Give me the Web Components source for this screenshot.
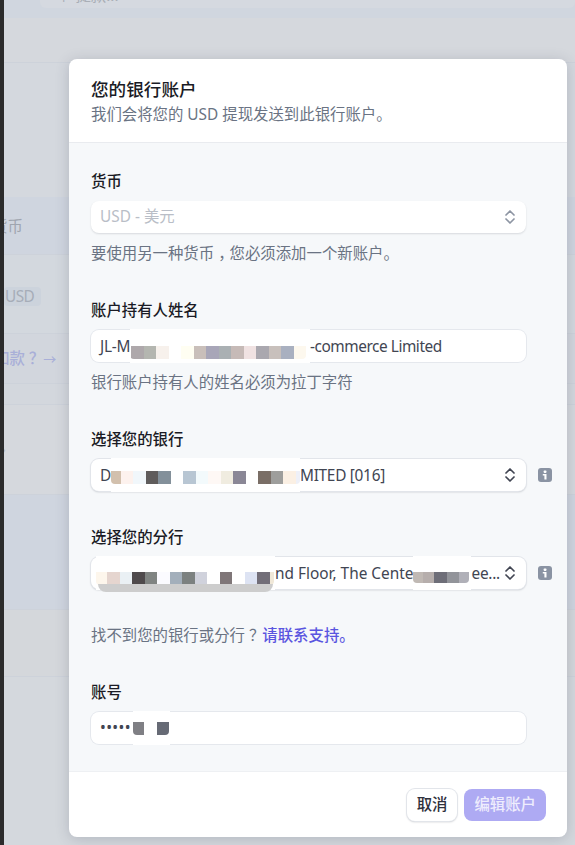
<!DOCTYPE html>
<html lang="zh">
<head>
<meta charset="utf-8">
<title>您的银行账户</title>
<style>
html, body { margin: 0; height: 100%; overflow: hidden; background: #d4d8dd; }
body { font: 15.4px/20px "Noto Sans", "Noto Sans CJK SC", sans-serif; }
/* full-width punctuation sits in the middle of its cell in the reference */
.mid { margin-left: 4px; letter-spacing: -4px; }
.lat { letter-spacing: -.28px; padding-top: 2px; }
</style>
</head>
<body>
<payout-screen>
    <page-row h="18" bg="#d0d6df"><search-stub>↑ 提款...</search-stub></page-row>
    <page-row h="45" bg="#d5d8dd" line></page-row>
    <page-row h="134" bg="#d4d8de"></page-row>
    <page-row h="58" bg="#cfd5df" line><span style="margin:2px 0 0 -12px;color:#9fa5af">货币</span></page-row>
    <page-row h="79" bg="#d3d8de" line><span style="background:#ccd3dc;color:#a6adb8;border-radius:4px;padding:0 7px 0 1px;margin-top:4px;line-height:19px;letter-spacing:-.6px">USD</span></page-row>
    <page-row h="50" bg="#d2d6dd" line><span style="margin-left:-10px;color:#a9afd8;font-weight:500">如款<span class="mid">？</span><span style="margin-left:3px;font-size:13px">→</span></span></page-row>
    <page-row h="21" bg="#d3d7dd" line></page-row>
    <page-row h="90" bg="#d5d8dd" line><span style="color:#b6bcc6;margin-left:-3px">›</span></page-row>
    <page-row h="115" bg="#cfd5df" line></page-row>
    <page-row h="67" bg="#d4d7db" line></page-row>
    <page-row h="168" bg="#d4d8dd"></page-row>

    <bank-modal slot="modal">
        <span slot="title">您的银行账户</span>
        <span slot="subtitle">我们会将您的 USD 提现发送到此银行账户。</span>

        <bank-field label="货币">
            <bank-input kind="disabled">USD - 美元</bank-input>
            <span slot="help">要使用另一种货币<span class="mid">，</span>您必须添加一个新账户。</span>
        </bank-field>

        <bank-field label="账户持有人姓名">
            <bank-input>
                <span class="lat">JL-M</span>
                <blur-patch style="width:180px" top="17" h="13"
                    cells="#fff:1,#aea8ab:12.5,#b4b6b0:12.5,#f7f1ec:12.5,#fff:12.5,#fffef2:12.5,#c9bfba:12.5,#a8a6b8:12.5,#aab0b3:12.5,#c6bab7:12.5,#f0e2e2:12.5,#aaa8af:12.5,#c8c0bc:12.5,#a9b0c0:12.5,#fdf8ee:12.5"></blur-patch>
                <span class="lat" style="letter-spacing:-.45px">-commerce Limited</span>
            </bank-input>
            <span slot="help">银行账户持有人的姓名必须为拉丁字符</span>
        </bank-field>

        <bank-field label="选择您的银行" info>
            <bank-input kind="select">
                <span class="lat">D</span>
                <blur-patch style="width:189px" top="13" h="13"
                    cells="#d2c0ad:10,#fdf2ee:12.5,#f1f7fb:12.5,#5f5c5c:12.5,#83909a:12.5,#fff:12.5,#b8c6d3:12.5,#f3fafc:12.5,#fef8f5:12.5,#f0ece0:12.5,#8a8796:12.5,#fff:12.5,#7a6e66:12.5,#9e9e9c:12.5,#fbf0e4:12.5,#eef0f8:4"></blur-patch>
                <span class="lat">MITED [016]</span>
            </bank-input>
        </bank-field>

        <bank-field label="选择您的分行" info>
            <bank-input kind="select">
                <blur-patch style="width:179px;margin-left:-4px" top="16" h="13" under
                    cells="#fdf6ec:11,#e5d5cf:12.5,#eaf0f4:12.5,#4f4a4c:12.5,#808482:12.5,#fbfbff:12.5,#a3afbb:12.5,#7c8180:12.5,#d0d2dc:12.5,#fff:12.5,#7f7678:12.5,#fff:12.5,#dde3f3:12.5,#726e78:12.5,#f0e8d8:4"></blur-patch>
                <span class="lat" style="letter-spacing:0">nd Floor, The Cente</span>
                <blur-patch style="width:58px" top="16" h="11"
                    cells="#c0b9b4:10,#b6aeac:11,#6e6e78:12.5,#92949a:12.5,#b0b0b8:10"></blur-patch>
                <span class="lat">ee...</span>
            </bank-input>
        </bank-field>

        <div>找不到您的银行或分行<span class="mid">？</span><a href="#" style="color:#5a55e0;font-weight:500;text-decoration:none;margin-left:2px">请联系支持。</a></div>

        <bank-field label="账号">
            <bank-input>
                <span style="letter-spacing:.4px">•••••</span>
                <blur-patch style="width:37px;margin-left:2px" top="11" h="13"
                    cells="#7f7f84:11,#fff:13,#666a75:12.5"></blur-patch>
            </bank-input>
        </bank-field>

        <bank-button slot="actions">取消</bank-button>
        <bank-button slot="actions" primary>编辑账户</bank-button>
    </bank-modal>
</payout-screen>

<script>
// page behind the dialog, dimmed. strip on the left is the neighbouring window
customElements.define('payout-screen', class extends HTMLElement {
    constructor() {
        super();
        this.attachShadow({mode: 'open'}).innerHTML = `
<style>
:host {
    display: flex;
    position: relative;
    width: 575px;
    height: 845px;
    overflow: hidden;
    filter: blur(.35px);
}
.strip {
    flex: none;
    width: 4px;
    background: #2b2b2b;
    z-index: 1;
}
.rows {
    flex: 1;
    min-width: 0;
    display: flex;
    flex-direction: column;
}
::slotted([slot=modal]) {
    position: absolute;
    top: 59px;
    left: 69px;
}
</style>
<div class="strip"></div>
<div class="rows"><slot></slot></div>
<slot name="modal"></slot>
`;
    }
});

customElements.define('page-row', class extends HTMLElement {
    connectedCallback() {
        this.attachShadow({mode: 'open'}).innerHTML = `
<style>
:host {
    display: flex;
    flex: none;
    align-items: center;
    box-sizing: border-box;
    height: ${this.getAttribute('h')}px;
    background: ${this.getAttribute('bg')};
    border-bottom: ${this.hasAttribute('line') ? '1px solid #cdd2da' : '0'};
    white-space: nowrap;
}
</style>
<slot></slot>
`;
    }
});

customElements.define('search-stub', class extends HTMLElement {
    constructor() {
        super();
        this.attachShadow({mode: 'open'}).innerHTML = `
<style>
:host {
    display: flex;
    align-items: flex-end;
    align-self: flex-start;
    box-sizing: border-box;
    height: 8px;
    width: 535px;
    margin-left: 36px;
    padding-left: 16px;
    overflow: hidden;
    line-height: 14px;
    background: #d5d9e0;
    border-radius: 0 0 6px 6px;
    color: #a9aeb6;
}
span { display: block; margin-bottom: 5px; }
</style>
<span><slot></slot></span>
`;
    }
});

customElements.define('bank-modal', class extends HTMLElement {
    constructor() {
        super();
        this.attachShadow({mode: 'open'}).innerHTML = `
<style>
:host {
    display: flex;
    flex-direction: column;
    width: 498px;
    border-radius: 8px;
    overflow: hidden;
    background: #fff;
    box-shadow: 0 2px 14px rgba(60, 66, 87, .22);
}
header {
    height: 84px;
    box-sizing: border-box;
    padding: 19px 22px 0;
    border-bottom: 1px solid #e9ebef;
    color: #6a7383;
}
h1 {
    margin: 0 0 4px;
    font-size: 17.6px;
    line-height: 23px;
    font-weight: 500;
    color: #1a1b25;
}
main {
    display: flex;
    flex-direction: column;
    gap: 37px;
    padding: 29px 15px 27px 22px;
    background: #f6f8fa;
    color: #6a7383;
}
footer {
    display: flex;
    justify-content: flex-end;
    gap: 7px;
    height: 66px;
    box-sizing: border-box;
    padding: 17px 21px 0 0;
    border-top: 1px solid #eef0f3;
}
</style>
<header>
    <h1><slot name="title"></slot></h1>
    <div><slot name="subtitle"></slot></div>
</header>
<main><slot></slot></main>
<footer><slot name="actions"></slot></footer>
`;
    }
});

customElements.define('bank-field', class extends HTMLElement {
    connectedCallback() {
        this.attachShadow({mode: 'open'}).innerHTML = `
<style>
:host {
    display: block;
}
label {
    display: block;
    line-height: 18px;
    padding-top: 1px;
    margin-bottom: 10px;
    font-weight: 500;
    color: #1a1b25;
}
.control {
    display: flex;
    align-items: center;
    gap: 12px;
}
.help {
    display: block;
    line-height: 21px;
    margin-top: 10px;
}
.help:not(.on) { display: none; }
svg { flex: none; }
</style>
<label>${this.getAttribute('label')}</label>
<div class="control">
    <slot></slot>
    ${this.hasAttribute('info') ? `<svg width="14" height="14" viewBox="0 0 14 14">
        <rect width="14" height="14" rx="3" fill="#8a93a3"/>
        <rect x="5.6" y="2.4" width="2.9" height="2.5" rx=".8" fill="#fff"/>
        <path d="M4.8 6h3.7v5.6H6.4V7.5H4.8z" fill="#fff"/>
    </svg>` : ''}
</div>
<div class="help ${this.querySelector('[slot=help]') ? 'on' : ''}"><slot name="help"></slot></div>
`;
    }
});

customElements.define('bank-input', class extends HTMLElement {
    connectedCallback() {
        const kind = this.getAttribute('kind') || '';
        const chevron = kind === 'disabled' ? '#8d95a3' : '#414552';
        this.attachShadow({mode: 'open'}).innerHTML = `
<style>
:host {
    display: flex;
    flex: none;
    align-items: center;
    box-sizing: border-box;
    width: 435px;
    height: 32px;
    padding: 0 9px;
    background: #fff;
    border-radius: 8px;
    white-space: nowrap;
    color: #414552;
    box-shadow: 0 0 0 1px #e5e8ed;
}
:host([kind=select]) {
    box-shadow: 0 0 0 1px #e2e5ea, 0 1px 2px rgba(30, 35, 50, .28);
}
:host([kind=disabled]) {
    color: #b9bec7;
    box-shadow: 0 1px 2px rgba(30, 35, 50, .14);
}
.value {
    flex: 1;
    min-width: 0;
    display: flex;
    align-self: stretch;
    align-items: center;
}
svg { flex: none; margin-right: 1px; }
</style>
<div class="value"><slot></slot></div>
${kind ? `<svg width="12" height="16" viewBox="0 0 12 16" fill="none" stroke="${chevron}" stroke-width="1.7" stroke-linecap="round" stroke-linejoin="round">
    <path d="M2 6l4-4 4 4M2 10l4 4 4-4"/>
</svg>` : ''}
`;
    }
});

// redacted part of a value: a white smear with a row of mosaic squares in it
customElements.define('blur-patch', class extends HTMLElement {
    connectedCallback() {
        const cells = this.getAttribute('cells').split(',').map(cell => {
            const [colour, width] = cell.split(':');
            return `<i style="background:${colour};width:${width}px"></i>`;
        }).join('');
        this.attachShadow({mode: 'open'}).innerHTML = `
<style>
:host {
    display: block;
    flex: none;
    position: relative;
    align-self: stretch;
    margin-top: -1px;
    margin-bottom: -1px;
    background: #fff;
}
.cells {
    display: flex;
    position: absolute;
    left: 0;
    top: ${this.getAttribute('top')}px;
    height: ${this.getAttribute('h')}px;
    overflow: hidden;
    border-radius: 0 0 4px 4px;
}
i { display: block; flex: none; height: 100%; }
.under {
    position: absolute;
    left: 2px;
    right: 2px;
    top: 28px;
    height: 8px;
    background: #cdcdcd;
    border-radius: 0 0 14px 14px;
}
</style>
<div class="cells">${cells}</div>
${this.hasAttribute('under') ? '<div class="under"></div>' : ''}
`;
    }
});

customElements.define('bank-button', class extends HTMLElement {
    constructor() {
        super();
        this.attachShadow({mode: 'open'}).innerHTML = `
<style>
:host {
    display: flex;
    align-items: center;
    justify-content: center;
    box-sizing: border-box;
    height: 32px;
    padding: 0 10px;
    border-radius: 8px;
    background: #fff;
    color: #30313d;
    font-weight: 500;
    box-shadow: 0 0 0 1px #e2e5ea, 0 1px 2px rgba(30, 35, 50, .28);
}
:host([primary]) {
    background: #aeaaf3;
    color: #eeedfd;
    box-shadow: none;
}
</style>
<slot></slot>
`;
    }
});
</script>
</body>
</html>
